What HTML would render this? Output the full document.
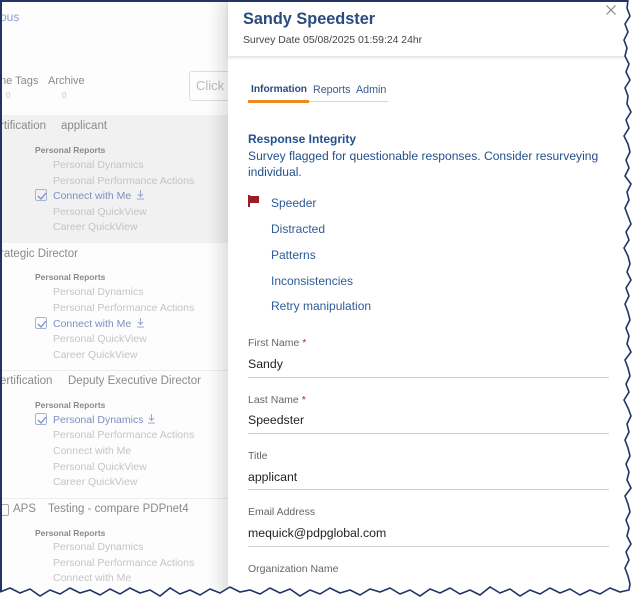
<!DOCTYPE html>
<html><head><meta charset="utf-8"><style>
*{margin:0;padding:0;box-sizing:border-box}
body{width:636px;height:600px;overflow:hidden;background:#fff;font-family:"Liberation Sans",Arial,sans-serif;position:relative}
.t{position:absolute;white-space:nowrap;line-height:1}
.g{color:#c4c4c4;font-size:10.5px}
.h{color:#8a8a8a;font-size:8.5px;font-weight:bold}
.r{color:#8a8a8a;font-size:11.5px}
.b{color:#7d8fbf;font-size:10.5px}
.cb{position:absolute;width:12px;height:12px;border:1px solid #a8b4d4;border-radius:2px}
.cb svg{position:absolute;left:1px;top:1px}
.dl{position:absolute;width:9px;height:10px}
.lab{color:#666;font-size:10.5px}
.val{color:#222;font-size:12.3px}
.ln{position:absolute;left:248px;width:361px;height:1px;background:#cfcfcf}
.lk{color:#2e5b9a;font-size:12px}
.star{color:#b02a2a}
</style></head><body>
<div style="position:absolute;left:0;top:0;width:228px;height:600px;background:#fdfdfd"></div>
<div style="position:absolute;left:0;top:115px;width:228px;height:128px;background:#f1f1f1"></div>
<div style="position:absolute;left:0;top:498px;width:228px;height:1px;background:#ececec"></div>
<div style="position:absolute;left:0;top:370px;width:228px;height:1px;background:#ececec"></div>
<div class="t" style="left:0;top:11px;color:#8a9cc8;font-size:12px">ous</div>
<div class="t r" style="left:0;top:76px;font-size:11px">ne Tags</div>
<div class="t r" style="left:48px;top:76px;font-size:11px">Archive</div>
<div class="t g" style="left:6px;top:92px;font-size:8px">0</div>
<div class="t g" style="left:62px;top:92px;font-size:8px">0</div>
<div style="position:absolute;left:189px;top:71px;width:60px;height:30px;border:1px solid #ddd;border-radius:3px"></div>
<div class="t" style="left:196px;top:79px;color:#bbb;font-size:13px">Click s</div>

<div class="t r" style="left:0;top:121px">rtification</div>
<div class="t r" style="left:61px;top:121px">applicant</div>
<div class="t h" style="left:35px;top:146px">Personal Reports</div>
<div class="t g" style="left:53px;top:160px">Personal Dynamics</div>
<div class="t g" style="left:53px;top:176px">Personal Performance Actions</div>
<div class="cb" style="left:35px;top:189px"><svg width="10" height="10"><path d="M1 5 L4 8 L9 2" fill="none" stroke="#7d8fbf" stroke-width="1.3"/></svg></div>
<div class="t b" style="left:53px;top:191px">Connect with Me</div>
<svg class="dl" style="left:136px;top:190px" viewBox="0 0 9 10"><path d="M4.5 0V6M2 4L4.5 6.5L7 4M1 9H8" fill="none" stroke="#9aa6c8" stroke-width="1"/></svg>
<div class="t g" style="left:53px;top:207px">Personal QuickView</div>
<div class="t g" style="left:53px;top:222px">Career QuickView</div>

<div class="t r" style="left:0;top:249px">rategic Director</div>
<div class="t h" style="left:35px;top:273px">Personal Reports</div>
<div class="t g" style="left:53px;top:287px">Personal Dynamics</div>
<div class="t g" style="left:53px;top:303px">Personal Performance Actions</div>
<div class="cb" style="left:35px;top:317px"><svg width="10" height="10"><path d="M1 5 L4 8 L9 2" fill="none" stroke="#7d8fbf" stroke-width="1.3"/></svg></div>
<div class="t b" style="left:53px;top:319px">Connect with Me</div>
<svg class="dl" style="left:136px;top:318px" viewBox="0 0 9 10"><path d="M4.5 0V6M2 4L4.5 6.5L7 4M1 9H8" fill="none" stroke="#9aa6c8" stroke-width="1"/></svg>
<div class="t g" style="left:53px;top:334px">Personal QuickView</div>
<div class="t g" style="left:53px;top:350px">Career QuickView</div>

<div class="t r" style="left:0;top:376px">ertification</div>
<div class="t r" style="left:68px;top:376px">Deputy Executive Director</div>
<div class="t h" style="left:35px;top:401px">Personal Reports</div>
<div class="cb" style="left:35px;top:413px"><svg width="10" height="10"><path d="M1 5 L4 8 L9 2" fill="none" stroke="#7d8fbf" stroke-width="1.3"/></svg></div>
<div class="t b" style="left:53px;top:415px">Personal Dynamics</div>
<svg class="dl" style="left:147px;top:414px" viewBox="0 0 9 10"><path d="M4.5 0V6M2 4L4.5 6.5L7 4M1 9H8" fill="none" stroke="#9aa6c8" stroke-width="1"/></svg>
<div class="t g" style="left:53px;top:430px">Personal Performance Actions</div>
<div class="t g" style="left:53px;top:446px">Connect with Me</div>
<div class="t g" style="left:53px;top:462px">Personal QuickView</div>
<div class="t g" style="left:53px;top:477px">Career QuickView</div>

<div class="cb" style="left:-3px;top:504px;border-color:#aaa"></div>
<div class="t r" style="left:13px;top:504px">APS</div>
<div class="t r" style="left:48px;top:504px">Testing - compare PDPnet4</div>
<div class="t h" style="left:35px;top:529px">Personal Reports</div>
<div class="t g" style="left:53px;top:542px">Personal Dynamics</div>
<div class="t g" style="left:53px;top:558px">Personal Performance Actions</div>
<div class="t g" style="left:53px;top:573px">Connect with Me</div>

<div style="position:absolute;left:228px;top:0;width:408px;height:600px;background:#fff;box-shadow:-8px 0 14px rgba(0,0,0,0.12)"></div>
<div style="position:absolute;left:228px;top:0;width:408px;height:56px;background:#fff;box-shadow:0 2px 3px rgba(0,0,0,0.12)"></div>
<div class="t" style="left:243px;top:11px;color:#2a4a80;font-size:16.3px;font-weight:bold">Sandy Speedster</div>
<div class="t" style="left:243px;top:36px;color:#444;font-size:10.4px">Survey Date 05/08/2025 01:59:24 24hr</div>
<svg style="position:absolute;left:606px;top:5px" width="10" height="10"><path d="M0.5 0.5L9.5 9.5M9.5 0.5L0.5 9.5" stroke="#888" stroke-width="1.2"/></svg>

<div class="t" style="left:251px;top:85px;color:#2a4a80;font-size:10.2px;font-weight:bold">Information</div>
<div class="t" style="left:313px;top:85px;color:#3a5a90;font-size:10.7px">Reports</div>
<div class="t" style="left:356px;top:85px;color:#3a5a90;font-size:10.7px">Admin</div>
<div style="position:absolute;left:248px;top:101px;width:140px;height:1px;background:#d5d5d5"></div>
<div style="position:absolute;left:248px;top:100px;width:61px;height:3px;background:#ef8a22"></div>

<div class="t" style="left:248px;top:133px;color:#23508f;font-size:12px;font-weight:bold">Response Integrity</div>
<div class="t" style="left:248px;top:148px;color:#23508f;font-size:12.1px;line-height:16px;white-space:normal;width:370px">Survey flagged for questionable responses. Consider resurveying individual.</div>
<svg style="position:absolute;left:248px;top:195px" width="12" height="12"><path d="M1 0V12" stroke="#9b1c22" stroke-width="2"/><path d="M2 1H11V8H2Z" fill="#9b1c22"/></svg>
<div class="t lk" style="left:271px;top:197px">Speeder</div>
<div class="t lk" style="left:271px;top:223px">Distracted</div>
<div class="t lk" style="left:271px;top:249px">Patterns</div>
<div class="t lk" style="left:271px;top:275px">Inconsistencies</div>
<div class="t lk" style="left:271px;top:300px">Retry manipulation</div>

<div class="t lab" style="left:248px;top:338px">First Name <span class="star">*</span></div>
<div class="t val" style="left:248px;top:358px">Sandy</div>
<div class="ln" style="top:377px"></div>
<div class="t lab" style="left:248px;top:395px">Last Name <span class="star">*</span></div>
<div class="t val" style="left:248px;top:414px">Speedster</div>
<div class="ln" style="top:433px"></div>
<div class="t lab" style="left:248px;top:451px">Title</div>
<div class="t val" style="left:248px;top:471px">applicant</div>
<div class="ln" style="top:489px"></div>
<div class="t lab" style="left:248px;top:507px">Email Address</div>
<div class="t val" style="left:248px;top:527px">mequick@pdpglobal.com</div>
<div class="ln" style="top:546px"></div>
<div class="t lab" style="left:248px;top:564px">Organization Name</div>

<div style="position:absolute;left:0;top:0;width:630px;height:2px;background:#1f3564"></div>
<div style="position:absolute;left:0;top:0;width:2px;height:595px;background:#1f3564"></div>
<svg style="position:absolute;left:0;top:0" width="636" height="600">
<path fill="#fff" d="M636 0 L628 0 L627 8 L630 16 L625 24 L628 32 L624 40 L627 48 L625 56 L629 64 L626 72 L630 80 L625 88 L628 96 L627 104 L631 112 L626 120 L629 128 L624 136 L628 144 L630 152 L626 160 L629 168 L625 176 L631 184 L627 192 L629 200 L625 208 L628 216 L631 224 L626 232 L629 240 L624 248 L628 256 L630 264 L627 272 L631 280 L626 288 L629 296 L625 304 L628 312 L630 320 L626 328 L629 336 L627 344 L631 352 L625 360 L628 368 L630 376 L626 384 L629 392 L624 400 L628 408 L631 416 L627 424 L629 432 L625 440 L628 448 L630 456 L626 464 L629 472 L627 480 L631 488 L625 496 L628 504 L630 512 L626 520 L629 528 L627 536 L631 544 L626 552 L629 560 L625 568 L628 576 L630 584 L629 590 L620 592 L610 588 L600 594 L590 590 L580 595 L570 589 L560 593 L550 588 L540 594 L530 590 L520 596 L510 589 L500 593 L490 587 L480 595 L470 590 L460 594 L450 588 L440 593 L430 589 L420 596 L410 590 L400 594 L390 588 L380 592 L370 589 L360 595 L350 590 L340 593 L330 588 L320 594 L310 590 L300 596 L290 589 L280 593 L270 588 L260 594 L250 590 L240 592 L230 587 L220 593 L210 589 L200 595 L190 590 L180 594 L170 588 L160 596 L150 590 L140 593 L130 588 L120 594 L110 589 L100 595 L90 590 L80 593 L70 588 L60 594 L50 590 L40 596 L30 589 L20 593 L10 588 L0 592 L0 600 L636 600 Z"/>
<path fill="none" stroke="#1f3564" stroke-width="1.6" d="M628 0 L627 8 L630 16 L625 24 L628 32 L624 40 L627 48 L625 56 L629 64 L626 72 L630 80 L625 88 L628 96 L627 104 L631 112 L626 120 L629 128 L624 136 L628 144 L630 152 L626 160 L629 168 L625 176 L631 184 L627 192 L629 200 L625 208 L628 216 L631 224 L626 232 L629 240 L624 248 L628 256 L630 264 L627 272 L631 280 L626 288 L629 296 L625 304 L628 312 L630 320 L626 328 L629 336 L627 344 L631 352 L625 360 L628 368 L630 376 L626 384 L629 392 L624 400 L628 408 L631 416 L627 424 L629 432 L625 440 L628 448 L630 456 L626 464 L629 472 L627 480 L631 488 L625 496 L628 504 L630 512 L626 520 L629 528 L627 536 L631 544 L626 552 L629 560 L625 568 L628 576 L630 584 L629 590 L620 592 L610 588 L600 594 L590 590 L580 595 L570 589 L560 593 L550 588 L540 594 L530 590 L520 596 L510 589 L500 593 L490 587 L480 595 L470 590 L460 594 L450 588 L440 593 L430 589 L420 596 L410 590 L400 594 L390 588 L380 592 L370 589 L360 595 L350 590 L340 593 L330 588 L320 594 L310 590 L300 596 L290 589 L280 593 L270 588 L260 594 L250 590 L240 592 L230 587 L220 593 L210 589 L200 595 L190 590 L180 594 L170 588 L160 596 L150 590 L140 593 L130 588 L120 594 L110 589 L100 595 L90 590 L80 593 L70 588 L60 594 L50 590 L40 596 L30 589 L20 593 L10 588 L0 592"/>
</svg>
</body></html>
